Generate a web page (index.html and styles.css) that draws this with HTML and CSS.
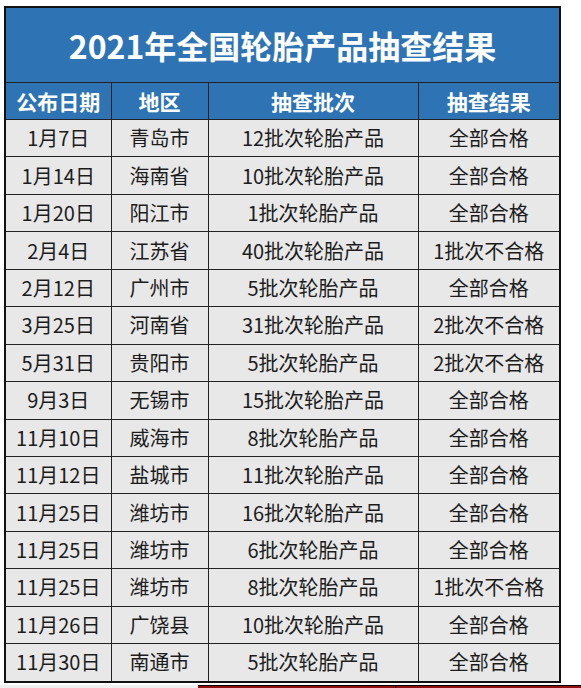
FILE: index.html
```html
<!DOCTYPE html>
<html lang="zh-CN">
<head>
<meta charset="utf-8">
<title>2021年全国轮胎产品抽查结果</title>
<link rel="stylesheet" href="styles.css">
</head>
<body>
<div class="page">
<table class="sheet">
  <colgroup>
    <col class="c1"><col class="c2"><col class="c3"><col class="c4">
  </colgroup>
  <thead>
    <tr class="title-row"><th colspan="4">2021年全国轮胎产品抽查结果</th></tr>
    <tr class="head-row"><th>公布日期</th><th>地区</th><th>抽查批次</th><th>抽查结果</th></tr>
  </thead>
  <tbody>
    <tr><td>1月7日</td><td>青岛市</td><td>12批次轮胎产品</td><td>全部合格</td></tr>
    <tr><td>1月14日</td><td>海南省</td><td>10批次轮胎产品</td><td>全部合格</td></tr>
    <tr><td>1月20日</td><td>阳江市</td><td>1批次轮胎产品</td><td>全部合格</td></tr>
    <tr><td>2月4日</td><td>江苏省</td><td>40批次轮胎产品</td><td>1批次不合格</td></tr>
    <tr><td>2月12日</td><td>广州市</td><td>5批次轮胎产品</td><td>全部合格</td></tr>
    <tr><td>3月25日</td><td>河南省</td><td>31批次轮胎产品</td><td>2批次不合格</td></tr>
    <tr><td>5月31日</td><td>贵阳市</td><td>5批次轮胎产品</td><td>2批次不合格</td></tr>
    <tr><td>9月3日</td><td>无锡市</td><td>15批次轮胎产品</td><td>全部合格</td></tr>
    <tr><td>11月10日</td><td>威海市</td><td>8批次轮胎产品</td><td>全部合格</td></tr>
    <tr><td>11月12日</td><td>盐城市</td><td>11批次轮胎产品</td><td>全部合格</td></tr>
    <tr><td>11月25日</td><td>潍坊市</td><td>16批次轮胎产品</td><td>全部合格</td></tr>
    <tr><td>11月25日</td><td>潍坊市</td><td>6批次轮胎产品</td><td>全部合格</td></tr>
    <tr><td>11月25日</td><td>潍坊市</td><td>8批次轮胎产品</td><td>1批次不合格</td></tr>
    <tr><td>11月26日</td><td>广饶县</td><td>10批次轮胎产品</td><td>全部合格</td></tr>
    <tr><td>11月30日</td><td>南通市</td><td>5批次轮胎产品</td><td>全部合格</td></tr>
  </tbody>
</table>
<div class="below">
  <div class="below-left"></div>
  <div class="below-red"><div class="red-a"></div><div class="red-b"></div></div>
</div>
</div>
</body>
</html>
```
FILE: styles.css
```css
html, body {
  margin: 0;
  padding: 0;
  background: #ffffff;
}
body {
  font-family: "Noto Sans CJK SC", "Noto Sans", sans-serif;
  width: 581px;
  height: 688px;
  overflow: hidden;
}
.page {
  padding: 6px 0 0 4px;
}
.sheet {
  border-collapse: collapse;
  width: 555px;
  table-layout: fixed;
  border: 2px solid #111;
}
.c1 { width: 106px; }
.c2 { width: 97px; }
.c3 { width: 210px; }
.c4 { width: 142px; }
.sheet th, .sheet td {
  border: 1.5px solid #222;
  padding: 0;
  text-align: center;
  white-space: nowrap;
}
.title-row th {
  background: #2e74b5;
  color: #ffffff;
  height: 74px;
  font-size: 32px;
  font-weight: 700;
  letter-spacing: 0;
}
.head-row th {
  background: #2e74b5;
  color: #ffffff;
  height: 36px;
  font-size: 21px;
  font-weight: 700;
  line-height: 1;
}
.sheet td {
  background: #e8e8e8;
  color: #1c1c1c;
  height: 36.45px;
  font-size: 20px;
  line-height: 1;
}
.below {
  display: flex;
  margin-top: 2px;
  margin-left: -4px;
  height: 4px;
}
.below-left {
  width: 198px;
  background: #f0f0f0;
}
.below-red {
  flex: 1;
  display: flex;
  border-top: 1px solid #000;
  background: #8e1010;
}
.red-a {
  width: 197px;
  border-right: 1px solid #000;
}
.red-b {
  flex: 1;
}
```
